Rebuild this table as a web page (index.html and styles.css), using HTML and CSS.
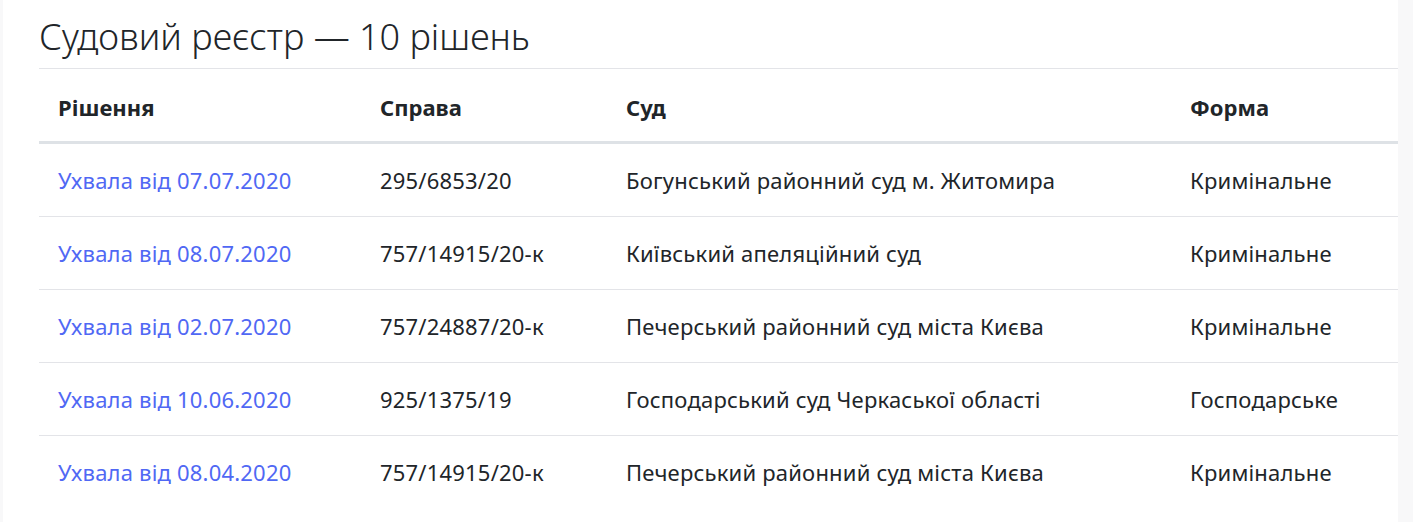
FILE: index.html
```html
<!DOCTYPE html>
<html lang="uk">
<head>
<meta charset="utf-8">
<title>Судовий реєстр</title>
<link rel="stylesheet" href="styles.css">
</head>
<body>
<div class="page">
  <h2 class="title">Судовий реєстр — 10 рішень</h2>
  <table class="registry">
    <colgroup>
      <col class="c1"><col class="c2"><col class="c3"><col class="c4">
    </colgroup>
    <thead>
      <tr><th>Рішення</th><th>Справа</th><th>Суд</th><th>Форма</th></tr>
    </thead>
    <tbody>
      <tr><td><a href="#">Ухвала від 07.07.2020</a></td><td>295/6853/20</td><td>Богунський районний суд м. Житомира</td><td>Кримінальне</td></tr>
      <tr><td><a href="#">Ухвала від 08.07.2020</a></td><td>757/14915/20-к</td><td>Київський апеляційний суд</td><td>Кримінальне</td></tr>
      <tr><td><a href="#">Ухвала від 02.07.2020</a></td><td>757/24887/20-к</td><td>Печерський районний суд міста Києва</td><td>Кримінальне</td></tr>
      <tr><td><a href="#">Ухвала від 10.06.2020</a></td><td>925/1375/19</td><td>Господарський суд Черкаської області</td><td>Господарське</td></tr>
      <tr><td><a href="#">Ухвала від 08.04.2020</a></td><td>757/14915/20-к</td><td>Печерський районний суд міста Києва</td><td>Кримінальне</td></tr>
    </tbody>
  </table>
</div>
</body>
</html>
```
FILE: styles.css
```css
html, body {
  margin: 0;
  padding: 0;
  background: #f8f8f9;
}
body {
  font-family: "Noto Sans", "Open Sans", sans-serif;
  color: #212529;
}
.page {
  background: #fff;
  margin-left: 3px;
  width: 1359px;
  padding: 13px 0 0 36px;
  min-height: 509px;
}
.title {
  margin: 0 0 8px 0;
  font-weight: 300;
  font-size: 36px;
  line-height: 47px;
  color: #212529;
}
.registry {
  width: 1359px;
  border-collapse: collapse;
  table-layout: fixed;
  font-size: 22px;
}
.c1 { width: 322px; }
.c2 { width: 246px; }
.c3 { width: 564px; }
.c4 { width: 227px; }
.registry th,
.registry td {
  text-align: left;
  padding: 23px 19px;
  line-height: 26px;
  border-top: 1px solid #e3e4e8;
  white-space: nowrap;
}
.registry td {
  letter-spacing: 0.2px;
}
.registry th {
  font-weight: 700;
  font-size: 22px;
  padding-top: 25px;
  padding-bottom: 21px;
  border-bottom: 3px solid #dee2e6;
}
.registry a {
  color: #5068f4;
  text-decoration: none;
}
```
